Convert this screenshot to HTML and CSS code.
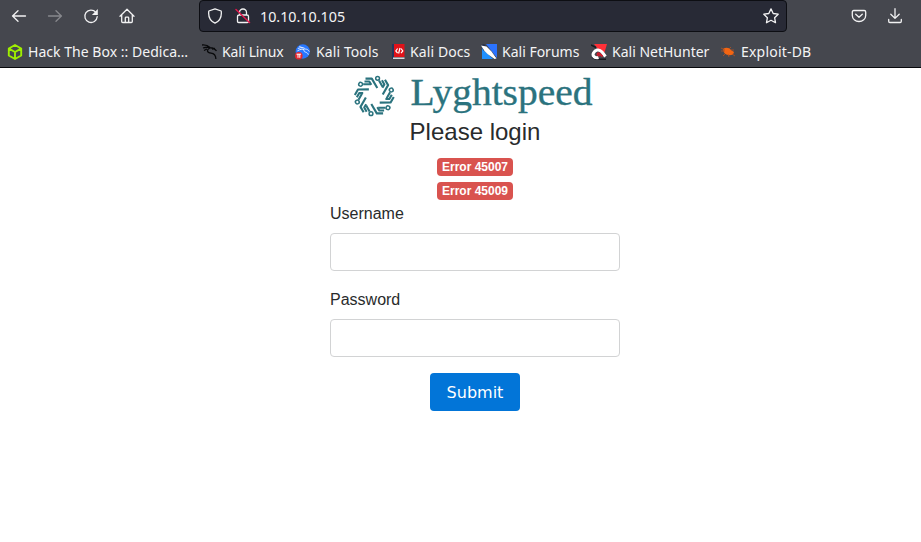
FILE: index.html
```
<!DOCTYPE html>
<html lang="en">
<head>
<meta charset="utf-8">
<title>Lyghtspeed</title>
<link rel="stylesheet" href="styles.css">
</head>
<body>
<header class="browser">
  <div class="toolbar">
    <nav class="nav">
      <svg class="icon" viewBox="0 0 16 16"><path d="M14.5 8H1.5M7 2.7 1.6 8 7 13.3"/></svg>
      <svg class="icon dim" viewBox="0 0 16 16"><path d="M1.5 8h13M9 2.7 14.4 8 9 13.3"/></svg>
      <svg class="icon" viewBox="0 0 16 16"><path d="M12.8 4.3A6.2 6.2 0 1 0 14.2 8.7"/><path class="solid" d="M14.8 1v6H8.9z"/></svg>
      <svg class="icon" viewBox="0 0 16 16"><path d="M1 8.2 8 1.3l7 6.900M2.700 6.800v6.700q0 1 1 1h8.600q1 0 1-1V6.800M6.300 14.500V10q0-.8.8-.8h1.800q.8 0 .8.8v4.500"/></svg>
    </nav>
    <div class="urlbar">
      <svg class="icon" viewBox="0 0 16 16"><path d="M8 .8 14.200 3c.7 5.500-1 9.800-6.200 12.200C2.800 12.800 1.100 8.500 1.800 3z"/></svg>
      <svg class="icon lock" viewBox="0 0 16 16"><path d="M4.500 7V4.500a3.500 3.500 0 0 1 7 0V7M4.500 7h7.500q1.500 0 1.500 1.500v4.800q0 1.200-1.200 1.200H3.700q-1.200 0-1.200-1.200V8.500Q2.500 7 4.500 7"/><path class="slash" d="m1 1.500 13.500 13"/></svg>
      <span class="address">10.10.10.105</span>
      <svg class="icon star" viewBox="0 0 16 16"><path d="m8 .9 2.200 4.600 5 .7-3.600 3.500.9 5L8 12.300l-4.500 2.400.9-5L.8 6.200l5-.7z"/></svg>
    </div>
    <div class="actions">
      <svg class="icon" viewBox="0 0 16 16"><path d="M2.800 2.500h10.400q1.500 0 1.500 1.500v3.500a6.700 6 0 0 1-13.400 0V4q0-1.500 1.500-1.500M4.700 6.300 8 9.300l3.300-3"/></svg>
      <svg class="icon" viewBox="0 0 16 16"><path d="M8 .7v9.500M3.800 6.300 8 10.400l4.200-4.100M1.700 11.500v1.800q0 1.200 1.200 1.200h10.200q1.200 0 1.200-1.200v-1.800"/></svg>
    </div>
  </div>
  <nav class="bookmarks">
    <a class="bookmark htb"><svg viewBox="0 0 16 16"><path fill="none" stroke="#9fef00" stroke-width="1.900" stroke-linejoin="round" d="m8 1 6.200 3.500v7L8 15l-6.200-3.500v-7zM2 4.700 8 8l6-3.300M8 8v7"/></svg><span>Hack The Box :: Dedica…</span></a>
    <a class="bookmark linux"><svg viewBox="0 0 16 16"><path fill="none" stroke="#08090b" stroke-width="1.300" d="M0 1c3-.3 6 .5 8 2.500M1 4c3-1 5-1 7-.3 4 .3 5 1 6.500 3.300M8 4c-4 2-3 4.800 1 5.200 3 .3 4.700 2 4.900 5.800M2 6.500l3-1.500M10 5l3-.5"/></svg><span>Kali Linux</span></a>
    <a class="bookmark tools"><svg viewBox="0 0 16 16"><circle cx="7.800" cy="7.500" r="7.200" fill="#2777ff"/><path fill="none" stroke="#dce9ff" stroke-width="1" d="M2.800 4.500c4-1.500 6.500-.8 7.500.5 2 .2 3 1 4 2.500M2.300 7c3-2 5-2 7-1.300-2 2.800 3.500 1.800 4 5M4.300 2.500l4 1.500"/><circle cx="3.800" cy="11.700" r="3.800" fill="#e5262d"/><path fill="none" stroke="#fff" d="M1.500 10.200h4.600M3 10v3.800M4.800 10v3.800"/></svg><span>Kali Tools</span></a>
    <a class="bookmark docs"><svg viewBox="0 0 16 16"><path fill="#e01219" d="M1 0h12.500v13H1z"/><path fill="#25365d" d="M1 0h2v15H1z"/><path fill="#d9d9dc" d="M2 13.500h11.500V15H2z"/><path fill="none" stroke="#fff" stroke-width="1.200" d="M6.600 4.500 4.800 7l1.800 2.200M10 4.500 11.800 7 10 9.200M9 4 7.600 9.500"/></svg><span>Kali Docs</span></a>
    <a class="bookmark forums"><svg viewBox="0 0 16 16"><path fill="#1f90ff" d="M1 3.500 12 15H1z"/><path fill="#2b73ff" d="M5 0h11v14z"/><path fill="#25304a" d="m0 1 3-1 12 13-2 2L2 6z"/><path fill="#fff" d="M0 1.500 5.500 2.500l5 5 5 7-2 .5-7-5L3.500 7z"/></svg><span>Kali Forums</span></a>
    <a class="bookmark hunter"><svg viewBox="0 0 16 16"><path fill="#ff3038" d="M3 0h13l-3 10L7 5z"/><path fill="none" stroke="#17191f" stroke-width="1.500" d="M0 1l5 2.500M1 13l4 2.300h10"/><path fill="none" stroke="#fff" stroke-width="3" d="M7.500 13.500C4 14.500 1 12 2.500 9S8 4.500 11 8l3.500 4.500"/><path fill="none" stroke="#d41b2b" stroke-width="1.800" d="m8.500 12-2-1.200q0-2.300 2-1.300l3 3"/></svg><span>Kali NetHunter</span></a>
    <a class="bookmark exploit"><svg viewBox="0 0 16 16"><path fill="#f36512" d="M3 5c3-2 6-1.500 8 1l3 2-1 2.500c-4 1.500-7 .5-9-2z"/><path fill="none" stroke="#b45222" stroke-width=".8" d="M1 4l4 2M1 7h4M5 10l-2 2M8 10l1 3M12 10l3 2M9 5l2-2M11 6h3"/></svg><span>Exploit-DB</span></a>
  </nav>
</header>
<main class="page">
  <form class="login">
    <svg class="brand" viewBox="0 0 240 44" role="img" aria-label="Lyghtspeed">
      <defs><g id="arm"><circle cx="3.300" cy="-17.700" r="1.900"/><path class="bar" d="m4.700-15.500 3.400 5.900M-8.800-17.400h6.300l5.500 9.400M-9.800-14.500h4.800l2 3.400"/></g></defs>
      <g class="mark" transform="translate(19.300 22)">
        <use href="#arm"/><use href="#arm" transform="rotate(60)"/><use href="#arm" transform="rotate(120)"/><use href="#arm" transform="rotate(180)"/><use href="#arm" transform="rotate(240)"/><use href="#arm" transform="rotate(300)"/>
      </g>
      <text class="wordmark" x="55.500" y="31" textLength="182" lengthAdjust="spacingAndGlyphs">Lyghtspeed</text>
    </svg>
    <h1>Please login</h1>
    <div class="errors"><span class="tag">Error 45007</span><span class="tag">Error 45009</span></div>
    <label for="username">Username</label>
    <input id="username" type="text">
    <label for="password">Password</label>
    <input id="password" type="password">
    <button type="button">Submit</button>
  </form>
</main>
</body>
</html>
```
FILE: styles.css
```
* { box-sizing: border-box; }
body { margin: 0; background: #fff; color: #292b2c; font: 16px/24px "Liberation Sans", sans-serif; }
.browser { height: 68px; background: #45474e; border-bottom: 1px solid #08090c; color: #f4f4f5; font-family: "Noto Sans", sans-serif; }
.toolbar { display: flex; height: 34px; }
.icon { display: block; flex: none; width: 16px; height: 16px; fill: none; stroke: #f2f2f3; stroke-width: 1.3; stroke-linejoin: round; stroke-linecap: round; }
.dim { opacity: .38; }
.solid { fill: #f2f2f3; stroke: none; }
.nav { display: flex; gap: 20px; width: 199px; padding: 8px 0 0 11px; }
.urlbar { display: flex; align-items: center; width: 588px; height: 32px; padding: 0 7px 0 7px; background: #282a36; border: 1px solid #0d0e13; border-radius: 4px; }
.lock { margin-left: 12px; }
.icon .slash { stroke: #e1184d; stroke-width: 1.5; }
.address { margin-left: 9px; padding-top: 2px; font-size: 14.3px; line-height: 28px; }
.star { margin-left: auto; }
.actions { display: flex; gap: 20px; padding: 8px 0 0 64px; }
.bookmarks { display: flex; align-items: center; height: 33px; padding: 2px 0 0 7px; font-size: 14px; }
.bookmark { display: flex; flex: none; align-items: center; gap: 5px; line-height: 20px; white-space: nowrap; }
.bookmark svg { flex: none; width: 16px; height: 16px; }
.htb { width: 195px; letter-spacing: .03px; }
.linux { width: 93px; gap: 4px; letter-spacing: -.15px; }
.tools { width: 96px; letter-spacing: .1px; }
.docs { width: 90px; gap: 3px; letter-spacing: .1px; }
.forums { width: 110px; }
.hunter { width: 129px; }
.exploit { letter-spacing: .2px; }
.page { display: flex; justify-content: center; padding: 6px 0 0 29px; }
.login { display: flex; flex-direction: column; width: 290px; }
.brand { align-self: center; width: 240px; height: 44px; overflow: visible; }
.mark { fill: none; stroke: #2b737e; stroke-width: 1.5; }
.bar { stroke-width: 2.1; stroke-linejoin: round; }
.wordmark { fill: #2b737e; stroke: #2b737e; stroke-width: .35; font: 38px "Liberation Serif", serif; }
h1 { margin: 0 0 13px; font-size: 24px; line-height: 27px; font-weight: 400; text-align: center; }
.errors { display: flex; flex-direction: column; align-items: center; gap: 6px; margin-bottom: 2px; }
.tag { height: 18px; padding: 0 5px; border-radius: 4px; background: #d9534f; color: #fff; font-size: 12px; line-height: 18px; font-weight: 700; }
label { margin-bottom: 7px; }
input { width: 290px; height: 38px; margin: 0 0 17px; padding: 8px 12px; border: 1px solid #d2d3d4; border-radius: 4px; background: #fff; }
#password { margin-bottom: 16px; }
button { align-self: center; width: 90px; height: 38px; border: 0; border-radius: 4px; background: #0275d8; color: #fff; font: 16px "DejaVu Sans", sans-serif; }
```
